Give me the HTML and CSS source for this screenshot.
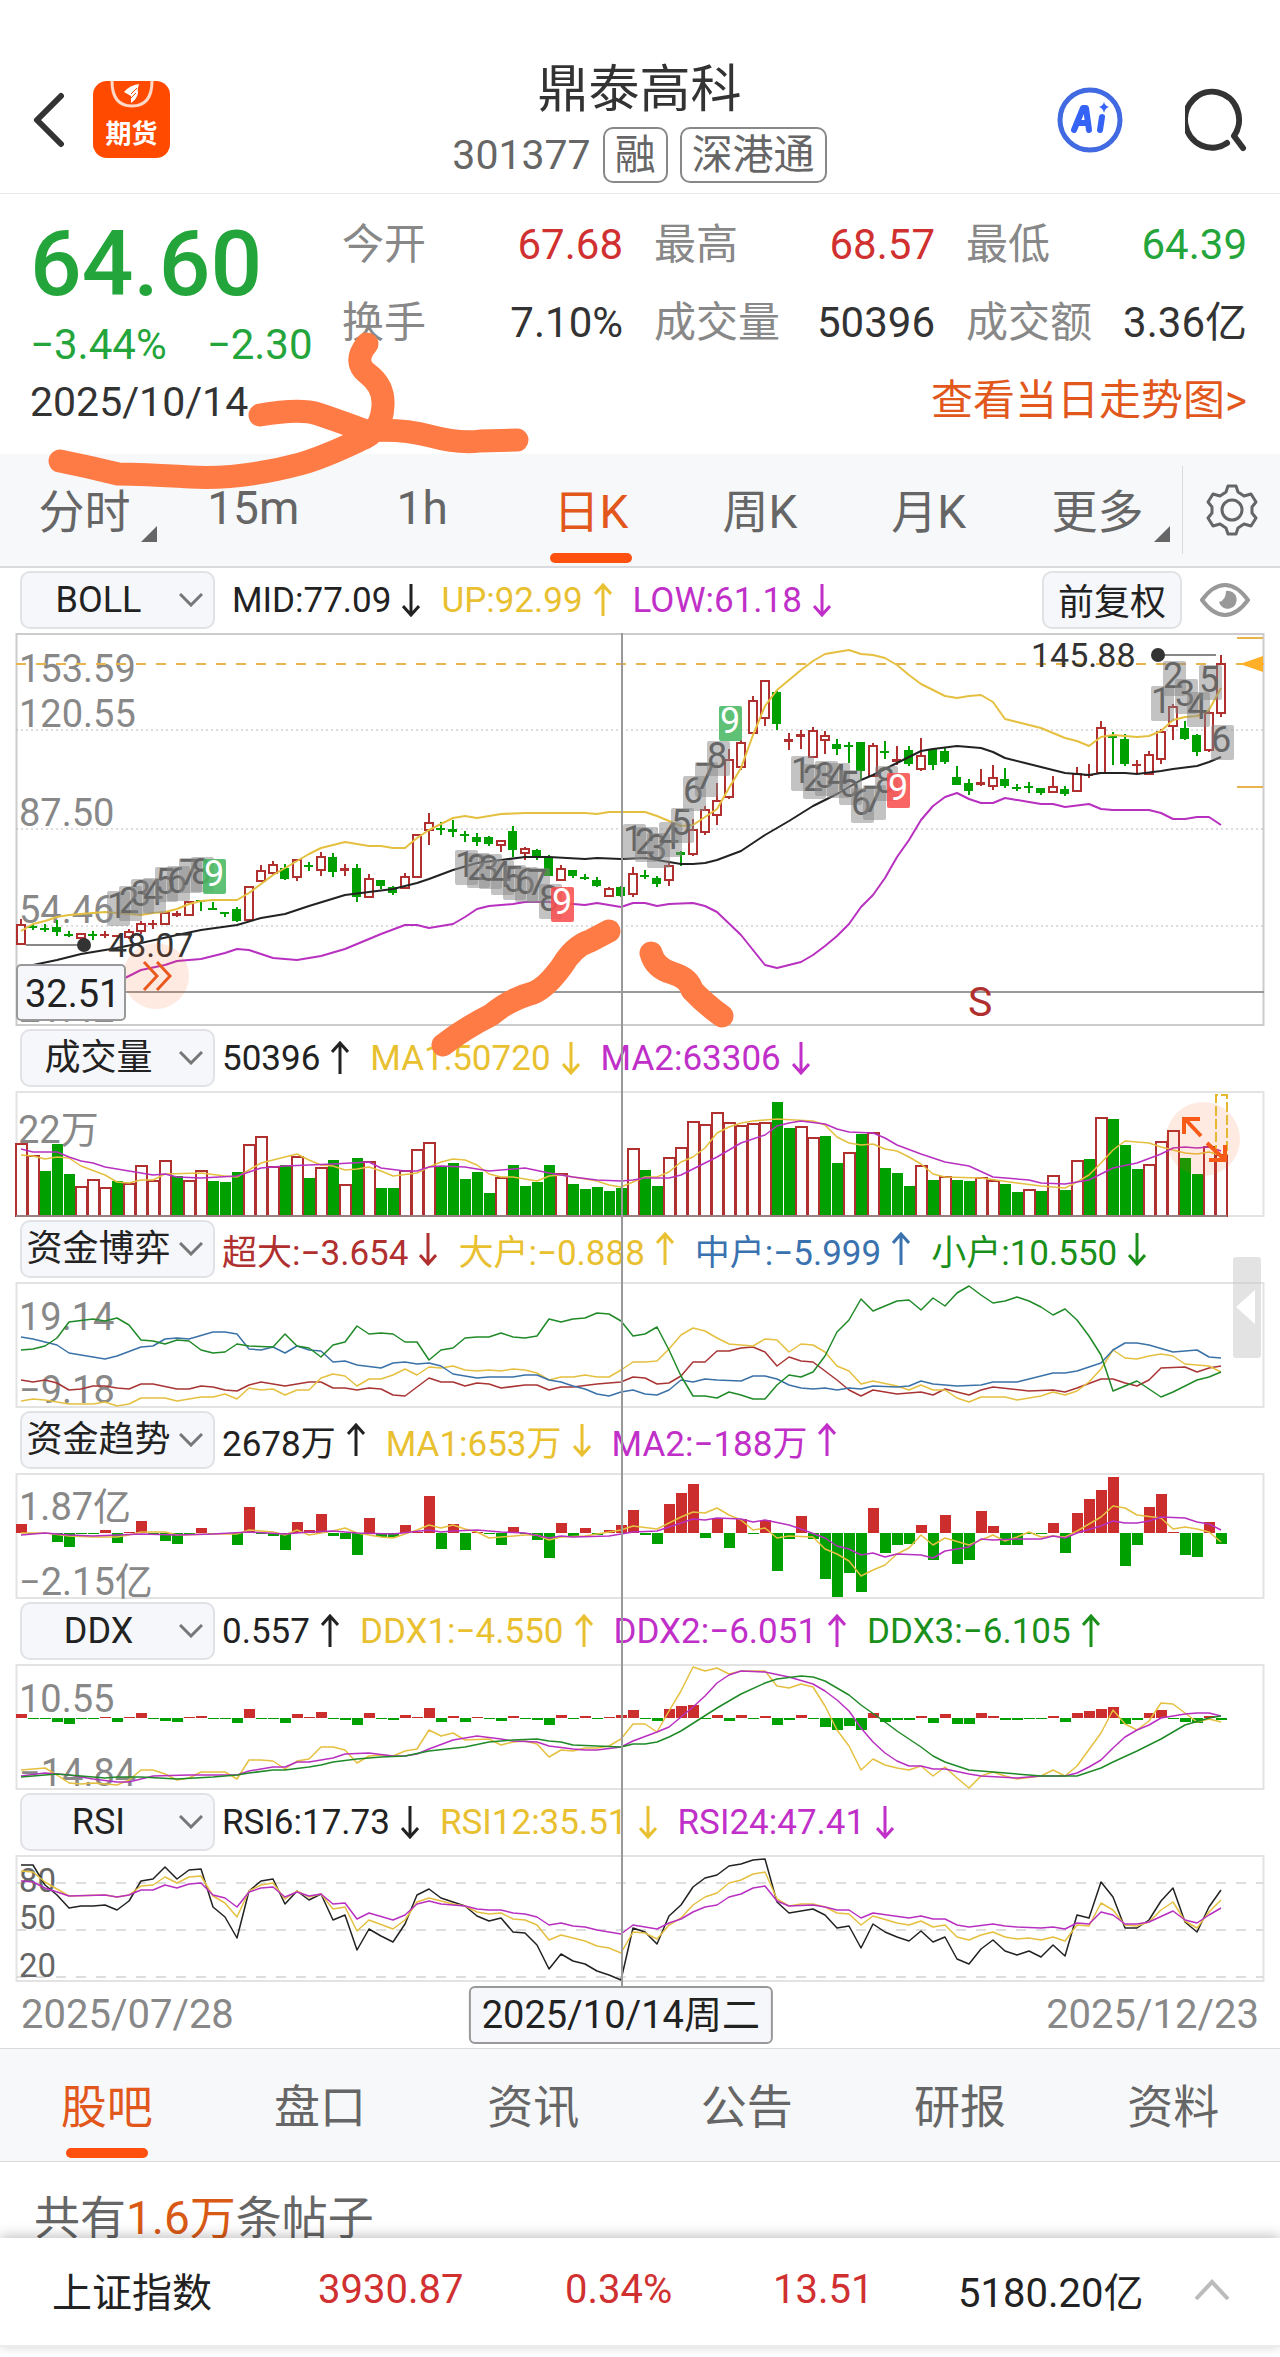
FILE: index.html
```html
<!DOCTYPE html>
<html lang="zh-CN">
<head>
	<meta charset="utf-8">
	<meta name="viewport" content="width=device-width">
	<title>鼎泰高科 301377</title>
	<link rel="stylesheet" href="styles.css">
</head>
<body>
<svg class="defs" aria-hidden="true">
	<symbol id="up" viewBox="0 0 18 34"><path d="M9 33V2M1 11l8-9 8 9" fill="none" stroke="currentColor" stroke-width="3"/></symbol>
	<symbol id="down" viewBox="0 0 18 34"><path d="M9 1v31M1 23l8 9 8-9" fill="none" stroke="currentColor" stroke-width="3"/></symbol>
	<symbol id="chev" viewBox="0 0 24 14"><path d="M1 1l11 11L23 1" fill="none" stroke="currentColor" stroke-width="3"/></symbol>
</svg>
<div class="page">
	<header class="top">
		<div class="top_left">
			<button class="icon_btn" aria-label="返回"><svg width="34" height="56" viewBox="0 0 34 56"><path d="M29 4L5 28l24 24" fill="none" stroke="#333" stroke-width="6" stroke-linecap="round" stroke-linejoin="round"/></svg></button>
			<a class="futures" href="#">
				<svg width="44" height="28" viewBox="0 0 44 28"><path d="M2 0Q2 25 22 25T42 0" fill="none" stroke="#ffd9c8" stroke-width="3"/><path d="M14 11Q20 4 29 3Q27 8 28 12Q27 18 21 22L21 15Z" fill="#fff"/><path d="M21 13L27 7M21 17L26 12" stroke="#ff4a00" stroke-width="1"/></svg>
				<span>期货</span>
			</a>
		</div>
		<div class="top_mid">
			<h1>鼎泰高科</h1>
			<p class="code">301377 <span class="tag">融</span><span class="tag">深港通</span></p>
		</div>
		<div class="top_right">
			<button class="icon_btn ai" aria-label="Ai"><svg width="66" height="66" viewBox="0 0 66 66"><circle cx="33" cy="33" r="30" fill="none" stroke="#4169e1" stroke-width="5"/><path d="M17 43L26 21H29L32 43M21 36H31" fill="none" stroke="#3563f5" stroke-width="6" stroke-linejoin="round" stroke-linecap="round"/><path d="M45 30L43 43" stroke="#3563f5" stroke-width="6" stroke-linecap="round"/><path d="M47 15q1 4 5 5q-4 1-5 6q-1-5-5-6q4-1 5-5" fill="#3563f5"/></svg></button>
			<button class="icon_btn" aria-label="搜索"><svg width="62" height="64" viewBox="0 0 62 64"><path d="M42 55A27 28 0 1 1 49 48L58 60" fill="none" stroke="#333" stroke-width="6" stroke-linecap="round" stroke-linejoin="round"/></svg></button>
		</div>
	</header>

	<section class="quote">
		<div class="quote_left">
			<div class="price">64.60</div>
			<div class="change"><span>−3.44%</span><span>−2.30</span></div>
			<div class="day">2025/10/14</div>
		</div>
		<div class="quote_right">
			<dl class="stats">
				<div><dt>今开</dt><dd class="red">67.68</dd></div>
				<div><dt>最高</dt><dd class="red">68.57</dd></div>
				<div><dt>最低</dt><dd class="green">64.39</dd></div>
				<div><dt>换手</dt><dd>7.10%</dd></div>
				<div><dt>成交量</dt><dd>50396</dd></div>
				<div><dt>成交额</dt><dd>3.36亿</dd></div>
			</dl>
			<a class="more_link" href="#">查看当日走势图&gt;</a>
		</div>
	</section>

	<nav class="periods">
		<div class="tabs">
			<button class="tab corner">分时</button>
			<button class="tab">15m</button>
			<button class="tab">1h</button>
			<button class="tab active">日K</button>
			<button class="tab">周K</button>
			<button class="tab">月K</button>
			<button class="tab corner">更多</button>
		</div>
		<button class="setting" aria-label="设置"><svg width="52" height="54" viewBox="0 0 52 54"><path d="M22 3H30L32 9L38 13L45 11L50 19L46 24V30L50 35L45 43L38 41L32 45L30 51H22L20 45L14 41L7 43L2 35L6 30V24L2 19L7 11L14 13L20 9Z" fill="none" stroke="#666" stroke-width="3" stroke-linejoin="round"/><circle cx="26" cy="27" r="10" fill="none" stroke="#666" stroke-width="3"/></svg></button>
	</nav>

	<main class="charts">
		<div class="row row_main">
			<span class="picker"><select aria-label="主图指标"><option>BOLL</option></select><svg><use href="#chev"/></svg></span>
			<span class="val">MID:77.09<svg><use href="#down"/></svg></span>
			<span class="val yellow">UP:92.99<svg><use href="#up"/></svg></span>
			<span class="val purple">LOW:61.18<svg><use href="#down"/></svg></span>
			<button class="adjust">前复权</button>
			<button class="icon_btn" aria-label="显示"><svg width="50" height="36" viewBox="0 0 50 36"><path d="M2 18Q13 3 25 3T48 18Q37 33 25 33T2 18Z" fill="none" stroke="#999" stroke-width="4"/><path d="M26 9a9 9 0 1 1-7 11Q26 18 26 9" fill="#999"/></svg></button>
		</div>
		<svg class="chart" id="kline" viewBox="16 0 1248 393"></svg>

		<div class="row">
			<span class="picker"><select aria-label="副图一"><option>成交量</option></select><svg><use href="#chev"/></svg></span>
			<span class="val">50396<svg><use href="#up"/></svg></span>
			<span class="val yellow">MA1:50720<svg><use href="#down"/></svg></span>
			<span class="val purple">MA2:63306<svg><use href="#down"/></svg></span>
		</div>
		<svg class="chart" id="volume" viewBox="16 0 1248 126"></svg>

		<div class="row">
			<span class="picker"><select aria-label="副图二"><option>资金博弈</option></select><svg><use href="#chev"/></svg></span>
			<span class="val crimson">超大:−3.654<svg><use href="#down"/></svg></span>
			<span class="val yellow">大户:−0.888<svg><use href="#up"/></svg></span>
			<span class="val blue">中户:−5.999<svg><use href="#up"/></svg></span>
			<span class="val leaf">小户:10.550<svg><use href="#down"/></svg></span>
		</div>
		<svg class="chart" id="game" viewBox="16 0 1248 126"></svg>

		<div class="row">
			<span class="picker"><select aria-label="副图三"><option>资金趋势</option></select><svg><use href="#chev"/></svg></span>
			<span class="val">2678万<svg><use href="#up"/></svg></span>
			<span class="val yellow">MA1:653万<svg><use href="#down"/></svg></span>
			<span class="val purple">MA2:−188万<svg><use href="#up"/></svg></span>
		</div>
		<svg class="chart" id="trend" viewBox="16 0 1248 126"></svg>

		<div class="row">
			<span class="picker"><select aria-label="副图四"><option>DDX</option></select><svg><use href="#chev"/></svg></span>
			<span class="val">0.557<svg><use href="#up"/></svg></span>
			<span class="val yellow">DDX1:−4.550<svg><use href="#up"/></svg></span>
			<span class="val purple">DDX2:−6.051<svg><use href="#up"/></svg></span>
			<span class="val leaf">DDX3:−6.105<svg><use href="#up"/></svg></span>
		</div>
		<svg class="chart" id="ddx" viewBox="16 0 1248 126"></svg>

		<div class="row">
			<span class="picker"><select aria-label="副图五"><option>RSI</option></select><svg><use href="#chev"/></svg></span>
			<span class="val">RSI6:17.73<svg><use href="#down"/></svg></span>
			<span class="val yellow">RSI12:35.51<svg><use href="#down"/></svg></span>
			<span class="val purple">RSI24:47.41<svg><use href="#down"/></svg></span>
		</div>
		<svg class="chart" id="rsi" viewBox="16 0 1248 127"></svg>

		<div class="dates"><span>2025/07/28</span><span>2025/12/23</span></div>
		<div class="cross"></div>
		<div class="cross_date">2025/10/14周二</div>
		<button class="handle" aria-label="展开"></button>
	</main>

	<nav class="tabs info_tabs">
		<button class="tab active">股吧</button>
		<button class="tab">盘口</button>
		<button class="tab">资讯</button>
		<button class="tab">公告</button>
		<button class="tab">研报</button>
		<button class="tab">资料</button>
	</nav>
	<p class="posts">共有<b>1.6万</b>条帖子</p>

	<footer class="index_bar">
		<span>上证指数</span>
		<span class="red">3930.87</span>
		<span class="red">0.34%</span>
		<span class="red">13.51</span>
		<span>5180.20亿</span>
		<svg width="36" height="22" viewBox="0 0 36 22"><path d="M2 20L18 3l16 17" fill="none" stroke="#bbb" stroke-width="4"/></svg>
	</footer>

	<!-- hand-drawn marks -->
	<svg class="doodle" viewBox="0 0 1280 2357" aria-hidden="true">
		<path d="M367 344Q352 362 368 374T383 405Q382 432 360 440Q322 458 300 464Q240 480 190 477T118 474Q90 467 60 461"/>
		<path d="M260 415Q300 408 318 414T366 431Q400 428 430 436T480 441L517 440"/>
		<path d="M609 931L590 941Q574 946 562 966Q546 988 533 993Q510 999 491 1015Q465 1028 443 1045"/>
		<path d="M651 953Q655 968 672 973T692 990Q704 1003 722 1016"/>
	</svg>
</div>
<script src="script.js"></script>
</body>
</html>
```

FILE: styles.css
```css
/* =====reset===== */
body, h1, p, dl, dt, dd { margin: 0; padding: 0; font-weight: normal; }
body { background: #fff; color: #333; font-family: "Roboto", "Noto Sans CJK SC", sans-serif; }
button, select { font-family: inherit; color: inherit; border: 0; padding: 0; margin: 0; background: none; }
a { text-decoration: none; }
svg { display: block; }
.defs { position: absolute; width: 0; height: 0; }
.page { position: relative; overflow: hidden; padding-bottom: 10px; }

/* =====colors===== */
.red { color: #d03030; }
.green { color: #24a53b; }
.yellow { color: #e8c030; }
.purple { color: #c030c8; }
.crimson { color: #b03030; }
.blue { color: #3a72b0; }
.leaf { color: #1a901a; }

/* =====header===== */
.top { display: grid; grid-template-columns: 1fr auto 1fr; align-items: center; padding: 56px 33px 10px 32px; border-bottom: 1px solid #eaeaea; }
.top_left, .top_right { display: flex; align-items: center; }
.top_left { gap: 27px; }
.top_right { justify-content: flex-end; gap: 62px; }
.futures { display: flex; flex-direction: column; align-items: center; justify-content: space-between; width: 77px; height: 77px; border-radius: 14px; background: #ff4a00; color: #fff; font-size: 26px; font-weight: bold; line-height: 48px; }
.top_mid { display: flex; flex-direction: column; align-items: center; gap: 4px; }
h1 { font-size: 51px; line-height: 67px; }
.code { display: flex; align-items: center; color: #666; font-size: 41px; line-height: 52px; }
.tag { margin-left: 12px; padding: 0 10px; border: 2px solid #888; border-radius: 10px; }

/* =====quote===== */
.quote { display: grid; grid-template-columns: 312px 1fr; padding: 12px 33px 14px 30px; }
.price { margin-top: 14px; color: #24a53b; font-size: 91px; font-weight: 500; line-height: 88px; }
.change { display: flex; gap: 40px; margin-top: 9px; color: #24a53b; font-size: 42px; line-height: 56px; }
.day { font-size: 41px; line-height: 58px; }
.stats { display: grid; grid-template-columns: repeat(3, 1fr); column-gap: 31px; font-size: 42px; line-height: 78px; white-space: nowrap; }
.stats div { display: flex; justify-content: space-between; }
.stats dt { color: #888; }
.more_link { display: block; text-align: right; color: #e2571c; font-size: 42px; line-height: 78px; }

/* =====tabs===== */
.periods { display: flex; align-items: center; background: #f7f8fa; border-bottom: 2px solid #d9dadd; }
.tabs { display: flex; flex: 1; }
.tab { position: relative; flex: 1; height: 112px; padding-bottom: 4px; color: #666; font-size: 46px; }
.active { color: #e2571c; }
.active::after { content: ""; position: absolute; left: 50%; bottom: 3px; width: 82px; height: 10px; margin-left: -41px; border-radius: 5px; background: #ff5010; }
.corner::after { content: ""; position: absolute; right: 12px; bottom: 24px; border-left: 16px solid transparent; border-bottom: 16px solid #666; }
.setting { display: flex; align-items: center; justify-content: center; width: 98px; height: 88px; border-left: 1px solid #d9dadd; }

/* =====charts===== */
.charts { position: relative; }
.row { display: flex; align-items: center; box-sizing: border-box; height: 65px; padding: 0 20px 1px; font-size: 35px; color: #222; white-space: nowrap; }
.picker { position: relative; width: 195px; margin-right: 7px; }
.picker select { box-sizing: border-box; display: block; width: 100%; height: 58px; padding-right: 38px; appearance: none; border: 2px solid #e0e2e6; border-radius: 10px; background: #f6f7fa; color: #222; font-size: 36px; text-align: center; text-align-last: center; }
.picker svg { position: absolute; right: 12px; top: 22px; width: 24px; height: 14px; color: #777; pointer-events: none; }
.row_main .picker { margin-right: 17px; }
.val { display: flex; align-items: center; gap: 11px; margin-right: 21px; }
.val svg { width: 18px; height: 34px; }
.adjust { box-sizing: border-box; width: 140px; height: 58px; margin: 0 18px 0 auto; padding-bottom: 4px; border: 2px solid #e0e2e6; border-radius: 10px; background: #f6f7fa; font-size: 36px; }
.row_main .icon_btn { margin-right: 10px; }
.chart { display: block; box-sizing: border-box; width: calc(100% - 32px); margin: 0 16px; height: auto; overflow: visible; }
.axis { fill: #888; font-size: 38px; }
.axis_rsi { fill: #666; font-size: 33px; }
.mark { fill: #333; font-size: 34px; }
.badge { fill: #222; font-size: 38px; }
.sell { fill: #b03030; font-size: 41px; }
.seq { fill: #666; font-size: 36px; text-anchor: middle; }
.seq_last { fill: #fff; }
.dates { display: flex; justify-content: space-between; padding: 0 21px; color: #888; font-size: 40px; line-height: 66px; }
.cross { position: absolute; left: 48.5%; top: 65px; bottom: 61px; width: 2px; background: #999; }
.cross_date { position: absolute; left: 48.5%; bottom: 4px; transform: translateX(-50%); padding: 0 11px; border: 2px solid #999; border-radius: 6px; background: #f6f7fa; color: #222; font-size: 38px; line-height: 54px; white-space: nowrap; }
.handle { position: absolute; right: 19px; top: 689px; width: 28px; height: 101px; border-radius: 3px; background: rgba(200, 200, 200, .5); }
.handle::after { content: ""; position: absolute; left: 3px; top: 33px; border: 17px solid transparent; border-left: 0; border-right: 19px solid #fff; }

/* =====bottom===== */
.info_tabs { background: #f7f8fa; border-top: 1px solid #d9dadd; border-bottom: 1px solid #d9dadd; }
.posts { padding: 0 34px; color: #666; font-size: 46px; line-height: 112px; }
.posts b { color: #d95a14; font-weight: normal; }
.index_bar { position: relative; display: grid; grid-template-columns: 266fr 247fr 208fr 185fr 236fr 36fr; align-items: center; box-sizing: border-box; height: 109px; margin-top: -36px; padding: 0 50px 4px 52px; background: #fff; border-bottom: 2px solid #ececec; box-shadow: 0 -2px 12px rgba(0, 0, 0, .25); color: #222; font-size: 40px; white-space: nowrap; }
.index_bar .red { color: #d03030; }
.doodle { position: absolute; left: 0; top: 0; width: 100%; pointer-events: none; }
.doodle path { fill: none; stroke: #ff7b45; stroke-width: 23; stroke-linecap: round; stroke-linejoin: round; }
```

FILE: script.js
```js
var STEP = 12, X0 = 21;
var RED = "#b03030", GREEN = "#00a000", YELLOW = "#e5c040", PURPLE = "#b830c0", BLACK = "#222";

function px(i) { return X0 + STEP * i; }

function add(box, name, attrs, text) {
	var el = document.createElementNS("http://www.w3.org/2000/svg", name);
	for (var k in attrs) el.setAttribute(k, attrs[k]);
	if (text) el.textContent = text;
	box.appendChild(el);
	return el;
}

// "index,y index,y ..." -> polyline
function line(box, color, data, width) {
	var pts = data.trim().split(/\s+/).map(function (p) {
		var a = p.split(",");
		return px(+a[0]) + "," + a[1];
	});
	add(box, "polyline", {points: pts.join(" "), fill: "none", stroke: color, "stroke-width": width || 1.5, "stroke-linejoin": "round"});
}

function frame(box, h, color) {
	add(box, "rect", {x: 16.5, y: 1, width: 1247, height: h - 2, fill: "none", stroke: color || "#e3e3e3", "stroke-width": 2});
}

function hline(box, y, color, dash, width) {
	add(box, "line", {x1: 16, x2: 1264, y1: y, y2: y, stroke: color, "stroke-width": width || 1, "stroke-dasharray": dash || "none"});
}

function label(box, x, y, text, cls) {
	add(box, "text", {x: x, y: y, "class": cls || "axis"}, text);
}

// solid bars above / below the zero line
function zeroBars(box, zero, data) {
	data.forEach(function (v, i) {
		var h = Math.max(1, Math.abs(v));
		add(box, "rect", {x: px(i) - 5, y: v > 0 ? zero - h : zero, width: 11, height: h, fill: v > 0 ? "#cc2e2e" : GREEN});
	});
}

/* ===== k line ===== */
var k = document.getElementById("kline");
frame(k, 393, "#ccc");
[97, 196, 293].forEach(function (y) { hline(k, y, "#bbb", "2 3"); });
label(k, 19, 49, "153.59");
label(k, 19, 94, "120.55");
label(k, 19, 193, "87.50");
label(k, 19, 290, "54.46");
label(k, 19, 389, "21.42");
hline(k, 31, "#e8b44c", "10 10", 2);

// up/down, high, body top, body bottom, low
var candles = "r 286 292 311 311,g 291 293 294 297,g 291 295 297 299,g 287 294 299 303,g 298 301 303 304,r 301 301 305 307,g 298 301 302 307,r 298 301 303 305,r 302 302 303 303,r 296 299 304 306," +
	"r 288 291 298 301,r 287 290 292 296,r 280 280 291 292,r 278 280 283 284,r 268 269 282 283,g 267 267 268 278,g 269 275 276 277,g 279 279 281 284,g 274 276 288 289,r 253 254 287 287," +
	"r 232 238 248 249,r 228 232 240 242,g 231 235 246 247,r 226 227 244 248,g 229 232 233 238,r 219 224 237 243,g 220 224 239 244,r 231 235 238 243,g 231 235 264 269,r 241 246 264 265," +
	"g 247 247 253 256,g 253 254 260 262,r 240 244 255 255,r 202 202 244 245,r 180 190 197 212,g 189 195 197 202,g 187 196 199 204,g 198 201 202 209,g 200 204 209 213,g 203 204 211 213," +
	"r 208 208 212 219,g 193 198 217 224,r 214 216 220 227,g 216 217 223 227,g 222 225 243 243,r 232 236 247 248,g 237 237 243 245,g 241 244 245 247,g 244 247 253 254,r 254 256 263 264," +
	"g 253 254 263 264,r 234 241 261 264,g 237 242 243 246,g 243 245 251 254,r 230 233 247 253,g 218 219 222 233,r 186 197 221 223,r 173 177 199 202,r 150 168 182 192,r 116 127 164 166," +
	"r 107 110 134 137,r 63 68 100 101,r 47 48 85 93,g 58 59 91 97,r 100 106 109 117,r 97 101 104 116,r 94 98 124 124,r 98 103 107 121,g 106 111 116 122,g 109 112 114 130," +
	"g 109 109 138 148,r 110 113 143 144,g 108 118 120 126,r 113 126 129 132,g 113 117 131 133,r 105 123 136 138,g 115 116 132 137,g 114 118 129 131,g 133 144 152 152,g 146 150 158 162," +
	"r 136 149 152 153,r 132 145 153 157,g 135 146 153 155,g 151 154 156 158,g 149 153 154 160,g 155 155 160 162,r 143 154 159 160,g 153 156 161 163,r 134 141 158 159,r 131 141 143 145," +
	"r 88 95 140 141,g 99 103 105 132,g 101 106 131 133,r 127 131 133 140,r 118 122 141 141,r 96 99 126 131,r 71 74 93 107,g 88 95 106 107,g 101 102 119 123,r 76 80 117 119,r 22 31 80 84";
candles.split(",").forEach(function (s, i) {
	var a = s.split(" "), up = a[0] == "r", c = up ? RED : GREEN, x = px(i);
	add(k, "line", {x1: x, x2: x, y1: a[1], y2: a[4], stroke: c, "stroke-width": 2});
	if (up && a[3] - a[2] > 3)
		add(k, "rect", {x: x - 4, y: a[2], width: 8, height: a[3] - a[2], fill: "#fff", stroke: c, "stroke-width": 2});
	else
		add(k, "rect", {x: x - 5, y: a[2], width: 9, height: Math.max(2, a[3] - a[2]), fill: c});
});

line(k, YELLOW, "0,298 1,291 2,288 3,284 4,282 5,281 6,280 7,279 8,280 9,281 10,282 11,280 12,279 13,276 14,271 15,268 16,267 18,267 19,260 20,251 21,242 22,235 23,228 24,221 25,215 26,212 27,209 28,211 29,213 30,213 31,215 32,215 33,205 34,197 35,191 36,185 37,183 38,185 39,183 40,181 42,180 47,180 48,181 49,179 50,179 52,179 53,183 54,188 55,193 56,192 57,184 58,176 59,155 60,135 61,102 62,73 63,57 64,47 65,37 66,28 67,21 68,19 69,17 70,21 71,22 72,25 73,32 74,42 75,51 76,57 77,63 78,65 79,63 80,62 81,69 82,86 83,89 84,92 85,95 87,105 88,108 89,113 90,104 91,102 93,104 94,103 95,98 96,87 97,84 98,83 99,77 100,55", 2);
line(k, BLACK, "0,334 1,332 3,327 5,321 8,315 10,310 13,302 15,297 18,292 20,285 22,281 24,273 27,262 29,259 31,256 33,250 34,246 36,237 38,230 40,227 42,224 44,224 47,226 48,225 50,226 52,225 53,227 54,229 55,231 56,231 57,230 58,227 60,218 62,202 64,188 66,173 68,161 70,147 71,142 73,130 75,118 76,116 78,113 80,115 81,119 82,125 84,131 87,140 89,142 90,140 92,140 93,141 95,138 96,136 98,133 99,129 100,124", 2);
line(k, PURPLE, "8,349 10,337 12,332 13,328 15,326 17,320 18,316 19,317 20,321 21,325 23,327 25,323 27,316 29,306 30,301 32,292 33,292 34,295 36,291 37,284 38,276 39,273 41,271 42,269 44,269 46,271 47,272 48,270 50,274 51,270 52,270 53,273 54,271 56,270 57,273 58,279 60,302 62,332 63,335 65,329 66,322 67,313 68,303 69,291 70,274 71,262 72,245 73,224 74,207 75,187 76,173 77,164 78,160 79,166 80,170 81,170 82,165 84,169 85,171 86,171 87,174 89,171 90,176 91,177 94,177 95,180 96,186 97,186 98,184 99,184 100,192", 2);

// nine-turn counters: first bar, colour of the 9, tops
[
	[8, "#48b862", [258, 253, 246, 245, 234, 233, 225, 224, 226]],
	[37, "#f85050", [217, 220, 221, 227, 232, 234, 235, 251, 254]],
	[51, "#48b862", [191, 194, 200, 189, 175, 143, 129, 108, 73]],
	[65, "#f85050", [123, 131, 128, 130, 137, 155, 152, 133, 140]],
	[95, "", [53, 28, 46, 59, 32, 92]]
].forEach(function (g) {
	g[2].forEach(function (top, n) {
		var x = px(g[0] + n) + 1, last = n == 8;
		add(k, "rect", {x: x - 11, y: top, width: 23, height: 35, rx: 2, fill: last ? g[1] : "#888", "fill-opacity": last ? .88 : .5});
		add(k, "text", {x: x - (last ? 0 : 1), y: top + 27, "class": last ? "seq seq_last" : "seq"}, n + 1);
	});
});

hline(k, 359, "#999", "", 2);
add(k, "line", {x1: 26, x2: 80, y1: 312, y2: 312, stroke: "#888", "stroke-width": 2});
add(k, "circle", {cx: 84, cy: 312, r: 7, fill: "#333"});
label(k, 108, 324, "48.07", "mark");
add(k, "line", {x1: 1160, x2: 1216, y1: 22, y2: 22, stroke: "#888", "stroke-width": 2});
add(k, "circle", {cx: 1158, cy: 22, r: 7, fill: "#333"});
label(k, 1031, 34, "145.88", "mark");
label(k, 968, 383, "S", "sell");
add(k, "path", {d: "M1240 31L1263 23V39Z", fill: "#ffb028"});
add(k, "path", {d: "M1237 5H1263M1237 154H1263", stroke: "#e8b44c", "stroke-width": 2});
add(k, "circle", {cx: 156, cy: 343, r: 33, fill: "#ff5010", "fill-opacity": .12});
add(k, "path", {d: "M144 329L157 343L144 357M157 329L170 343L157 357", fill: "none", stroke: "#e85a20", "stroke-width": 3});
add(k, "rect", {x: 17, y: 332, width: 108, height: 55, rx: 4, fill: "#f6f7fa", stroke: "#999", "stroke-width": 2});
label(k, 25, 374, "32.51", "badge");

/* ===== volume ===== */
var v = document.getElementById("volume");
frame(v, 126);
[72,60,-45,-72,-42,29,36,28,-35,32,50,35,55,-40,35,45,-35,-34,-44,71,79,49,-51,59,-38,48,-56,31,-58,54,-28,-28,45,66,73,-49,-53,-37,-44,-23,38,-51,-30,-34,-51,42,-32,-27,-29,-25,-28,67,
-46,-30,58,68,94,91,103,93,90,92,93,-114,-88,89,78,-80,-53,63,-82,83,-48,-43,-30,50,-36,39,-36,-35,38,35,-32,-24,26,-25,40,-26,55,-57,98,-97,-71,-47,51,74,85,-58,-42,69,61].forEach(function (h, i) {
	if (h > 0)
		add(v, "rect", {x: px(i) - 5, y: 125 - h, width: 11, height: h, fill: "#fff", stroke: RED, "stroke-width": 2});
	else
		add(v, "rect", {x: px(i) - 5, y: 125 + h, width: 11, height: 1 - h, fill: GREEN});
});
label(v, 18, 52, "22万");
add(v, "path", {d: "M16 125H1227", stroke: "#998080", "stroke-width": 2});
line(v, YELLOW, "0,64 1,65 2,68 3,66 4,67 5,75 7,84 8,91 9,92 10,89 11,89 12,83 15,82 17,85 18,86 19,79 20,72 23,63 24,69 25,74 26,75 27,79 28,78 29,76 30,80 31,85 33,82 34,76 35,71 36,68 37,69 38,74 39,83 40,86 41,86 43,90 44,85 45,84 48,90 49,94 50,96 51,91 52,86 53,86 54,81 55,71 56,66 57,57 58,42 59,36 60,32 61,30 63,28 66,30 67,34 68,46 69,52 70,54 71,53 72,58 73,60 74,66 75,73 76,83 77,86 80,87 83,92 85,95 87,97 88,91 89,84 90,72 91,59 92,50 94,52 95,56 96,59 97,62 98,63 99,61 100,64");
line(v, PURPLE, "0,58 1,61 3,61 4,66 5,70 6,72 7,76 9,80 11,84 12,83 13,86 15,87 18,85 19,81 20,77 22,75 26,73 29,71 30,77 32,80 33,80 34,76 35,75 37,76 39,80 42,77 44,82 46,86 48,89 50,90 51,89 52,87 54,87 55,84 56,78 58,66 60,52 62,44 63,35 64,32 65,30 67,33 68,38 69,41 71,42 72,47 73,54 75,63 77,71 79,75 81,86 84,89 85,92 87,93 88,91 89,89 91,77 93,72 95,63 96,57 97,56 98,57 99,56 100,60");
add(v, "circle", {cx: 1203, cy: 48, r: 37, fill: "#ff5010", "fill-opacity": .12});
add(v, "path", {d: "M1216 64V4H1227V64", fill: "none", stroke: "#e5b830", "stroke-width": 2, "stroke-dasharray": "10 3"});
add(v, "path", {d: "M1201 45L1185 28M1184 43V28H1200M1207 52L1224 68M1225 54V69H1209", fill: "none", stroke: "#f85a18", "stroke-width": 4});

/* ===== 资金博弈 ===== */
var g = document.getElementById("game");
frame(g, 126);
label(g, 19, 48, "19.14");
label(g, 19, 121, "−9.18");
line(g, "#a83434", "0,98 1,100 2,98 3,101 4,108 5,107 6,104 7,104 8,106 9,107 10,102 11,102 13,107 14,107 15,104 16,105 17,108 18,109 19,103 20,100 22,104 24,100 25,100 26,106 27,106 28,108 29,106 30,107 31,113 32,114 34,96 35,100 36,100 37,104 38,101 39,102 40,106 42,103 43,103 44,108 45,105 46,105 48,102 50,100 51,95 52,96 53,102 54,101 55,94 56,80 57,80 58,69 59,69 60,66 61,65 62,70 63,84 64,75 65,79 66,80 67,89 68,98 69,108 70,114 71,108 73,112 75,110 76,113 77,107 79,113 80,108 81,105 84,109 86,108 87,110 88,106 90,97 91,97 92,101 93,104 94,98 95,86 97,85 98,90 99,86 100,84");
line(g, YELLOW, "0,119 1,117 2,118 4,122 6,122 7,120 8,124 9,122 10,116 12,116 13,119 15,115 16,115 17,112 18,117 19,106 20,108 21,107 22,113 23,108 24,108 25,96 26,92 27,94 28,104 29,97 30,97 31,93 32,87 33,93 34,85 35,86 36,84 37,88 38,89 39,88 40,89 41,87 42,88 43,91 44,98 45,95 46,95 47,93 48,95 49,95 50,88 51,80 52,80 53,79 54,67 55,53 56,46 57,49 58,56 59,62 60,63 61,64 62,57 63,58 64,70 65,62 66,63 67,70 68,84 69,89 70,102 71,99 73,104 74,108 75,103 76,108 77,108 78,116 79,120 80,115 82,115 83,118 85,114 86,110 87,113 88,109 89,100 90,87 91,68 92,76 93,77 94,74 95,72 96,74 97,82 99,84 100,90");
line(g, "#3a72a8", "0,55 1,57 3,63 4,71 5,73 7,77 8,74 10,65 11,64 12,57 13,56 14,57 16,50 17,50 18,52 19,67 20,68 21,65 22,71 23,64 24,68 25,69 26,80 27,79 28,83 30,86 31,81 32,80 33,82 34,81 35,84 36,92 38,96 39,95 41,95 42,93 43,93 44,98 45,100 46,104 47,107 48,112 49,114 50,110 51,108 52,112 53,113 54,108 55,98 56,100 57,97 58,98 60,99 61,94 62,94 63,97 64,103 65,106 66,107 67,106 68,108 69,106 70,107 71,104 73,105 74,104 75,99 76,102 78,104 80,103 81,100 83,100 84,97 86,91 87,91 88,89 90,81 91,68 92,61 93,61 94,63 96,70 98,68 99,75 100,76");
line(g, "#208a28", "0,68 1,67 2,64 3,56 4,40 6,37 7,39 8,36 9,43 10,58 11,59 12,62 13,58 14,59 15,68 16,71 17,70 18,62 19,64 21,65 22,52 23,64 24,66 25,75 26,63 27,60 28,44 29,52 30,51 31,52 32,60 33,60 34,78 35,68 36,66 37,56 38,55 39,55 40,51 41,55 42,56 43,54 44,37 45,40 46,37 47,36 48,31 49,32 50,39 51,54 52,52 53,45 54,68 55,94 56,114 57,114 58,116 59,110 60,113 61,117 62,117 63,103 64,93 65,95 66,90 67,74 68,50 69,38 70,17 71,29 72,24 73,19 74,18 75,28 76,16 77,24 78,11 79,4 80,13 81,21 82,19 83,15 84,19 85,25 86,33 87,27 88,38 89,54 90,73 91,109 92,104 93,99 94,107 95,115 96,110 97,104 98,98 99,95 100,90");

/* ===== 资金趋势 ===== */
var t = document.getElementById("trend");
frame(t, 126);
label(t, 19, 47, "1.87亿");
label(t, 19, 122, "−2.15亿");
zeroBars(t, 60, [9,-1,-1,-9,-14,-1,-1,3,-10,1,12,-1,-8,-11,-1,5,-1,-1,-12,26,-1,-3,-17,11,3,19,-3,-6,-22,15,-4,-4,8,1,37,-16,9,-17,1,-1,-12,6,-1,-7,-25,10,-3,5,-2,3,8,23,-2,-11,29,40,49,-5,15,-15,14,-1,13,-38,-6,17,-6,-46,-64,-40,-59,25,-20,-12,-11,8,-27,18,-31,-27,22,7,-12,-12,-1,-1,10,-20,20,34,43,56,-33,-12,26,39,1,-22,-24,11,-11]);
line(t, YELLOW, "0,60 2,60 4,63 6,64 8,64 9,62 10,59 12,59 13,62 16,61 18,61 19,57 20,58 21,59 22,62 23,57 24,62 26,58 27,55 28,60 30,64 31,65 33,57 34,52 35,55 36,52 37,56 38,59 39,65 40,64 42,62 43,62 44,67 45,64 47,63 49,59 50,57 51,53 53,56 54,50 55,44 56,39 57,40 58,35 59,42 60,47 61,57 62,55 63,65 64,63 66,64 67,76 68,81 69,88 70,103 71,97 72,92 73,81 74,75 75,62 76,72 77,65 79,72 81,62 82,68 83,64 84,59 85,64 86,63 87,64 88,58 89,51 90,44 91,33 92,35 93,42 95,45 96,56 97,54 98,56 99,59 100,69");
line(t, PURPLE, "0,62 2,60 4,62 6,63 8,62 10,61 13,62 16,61 19,59 22,61 24,59 26,58 28,60 31,61 34,57 35,59 36,58 38,57 40,59 42,60 44,65 45,63 46,64 49,63 51,59 53,58 54,54 55,50 56,46 57,47 58,45 60,46 61,49 62,47 64,52 65,56 67,65 68,73 69,76 70,82 71,80 72,84 73,81 75,82 76,85 77,78 79,74 80,66 81,67 83,66 85,66 86,63 87,65 88,60 90,53 91,48 92,50 93,50 94,48 95,44 97,45 98,49 99,51 100,57");

/* ===== DDX ===== */
var d = document.getElementById("ddx");
frame(d, 126);
label(d, 19, 48, "10.55");
label(d, 19, 122, "−14.84");
zeroBars(d, 54, [4,-1,-1,-4,-6,-1,-1,1,-4,1,5,-1,-3,-4,1,2,-1,-1,-5,9,-1,-1,-5,4,1,6,-1,-2,-7,5,-1,-2,3,1,10,-4,2,-4,1,-1,-3,2,-1,-2,-7,3,-1,2,-1,1,3,8,-1,-3,9,12,13,-1,3,-3,3,-1,2,-7,-2,3,-1,-9,-12,-8,-12,5,-4,-2,-2,2,-5,4,-6,-6,5,2,-2,-2,-1,-1,2,-4,5,7,9,11,-6,-2,5,8,-1,-4,-5,2,-2]);
line(d, YELLOW, "0,106 1,105 2,104 3,111 4,119 5,120 6,119 8,121 9,116 10,106 11,106 12,110 13,116 14,114 15,108 17,108 18,115 19,96 20,96 21,97 22,105 23,97 24,95 25,83 26,83 27,86 28,99 29,92 30,91 31,92 32,87 33,85 34,66 35,72 36,69 37,76 39,75 40,81 41,78 42,77 43,80 44,93 45,86 46,87 47,84 48,84 49,82 50,75 51,60 52,60 53,68 54,47 55,27 56,3 57,7 58,4 59,10 60,7 62,7 63,22 64,24 65,20 66,23 67,42 68,66 69,82 70,106 71,95 72,101 73,104 74,106 75,102 76,112 77,103 78,114 79,124 80,112 81,108 82,112 83,115 85,112 86,106 87,112 88,102 90,69 91,46 92,60 93,66 94,57 95,39 96,40 97,49 98,58 99,55 100,58");
line(d, PURPLE, "0,112 2,109 4,111 6,115 8,118 9,118 11,112 14,111 18,111 19,107 20,105 21,103 22,103 23,98 24,98 26,94 27,90 29,89 31,92 32,92 33,90 34,85 36,76 38,72 40,75 41,77 43,78 44,82 46,85 47,86 48,86 50,83 51,77 53,68 54,63 56,43 57,32 58,19 59,11 60,7 62,8 64,13 66,20 67,27 68,36 69,47 70,64 71,78 72,89 73,97 74,102 75,102 76,105 77,105 79,110 80,112 83,114 85,112 87,112 88,109 89,103 90,96 91,84 92,73 93,66 94,61 95,54 96,52 97,50 98,49 99,49 100,52");
line(d, "#208a28", "0,113 3,110 5,112 7,114 8,113 10,113 13,115 16,113 18,111 19,109 21,106 22,106 24,103 25,101 26,98 28,95 30,93 32,92 34,87 37,83 39,78 41,76 43,75 44,77 45,78 46,81 48,82 50,83 51,80 52,80 53,78 54,73 55,67 58,44 60,30 62,19 63,15 65,12 66,13 67,17 69,31 70,41 72,58 73,67 75,83 76,92 77,98 78,102 79,106 81,108 84,111 85,112 88,112 90,104 91,98 93,87 95,75 97,61 99,54 100,52");

/* ===== RSI ===== */
var r = document.getElementById("rsi");
frame(r, 127);
[28, 75, 122].forEach(function (y) { hline(r, y, "#ddd", "10 10", 2); });
label(r, 19, 37, "80", "axis_rsi");
label(r, 19, 74, "50", "axis_rsi");
label(r, 19, 122, "20", "axis_rsi");
line(r, BLACK, "0,10 1,10 2,30 3,40 4,53 5,51 6,51 7,50 8,55 9,46 10,26 11,24 12,12 13,24 14,15 15,14 16,52 17,62 18,83 19,36 20,26 21,24 22,49 23,36 24,45 25,39 26,65 27,60 28,95 29,74 30,81 31,87 32,69 33,40 34,34 35,43 36,47 37,51 38,61 39,66 40,63 41,77 42,78 43,90 44,114 45,99 46,106 47,109 48,116 49,120 50,125 51,73 52,77 53,89 54,61 55,50 56,32 57,23 58,20 59,11 60,9 61,5 62,4 63,47 64,58 65,56 66,54 67,60 68,73 69,71 70,93 71,69 72,77 73,82 74,86 75,76 76,87 77,82 78,104 79,109 80,94 81,85 82,96 83,100 84,96 85,102 86,90 87,101 88,60 89,63 90,27 91,42 92,73 93,73 94,65 95,46 96,33 97,67 98,77 99,52 100,35");
line(r, YELLOW, "0,16 1,17 2,27 3,34 4,41 7,40 8,42 9,40 10,31 11,30 12,22 13,28 14,22 15,21 16,41 17,48 18,62 19,36 20,30 21,28 22,44 23,36 24,42 25,39 26,54 27,52 28,76 29,65 31,74 32,65 33,47 34,43 36,49 37,51 38,57 39,59 40,58 41,64 42,65 43,70 44,85 45,80 47,86 48,91 49,93 50,98 51,77 52,78 53,84 54,70 55,63 56,50 57,42 58,38 59,28 60,25 61,19 62,17 63,44 64,51 65,49 66,49 67,52 68,58 69,59 70,70 71,61 73,68 74,70 75,66 76,72 77,70 78,82 79,85 80,80 81,77 82,82 83,84 84,83 85,85 86,82 87,86 88,70 89,71 90,48 91,55 92,70 93,71 94,67 95,55 96,47 97,66 98,73 99,57 100,45");
line(r, PURPLE, "0,26 1,27 2,33 3,37 4,41 7,40 8,42 9,40 10,35 11,35 12,30 13,33 14,29 15,28 16,40 17,43 18,52 19,37 20,33 21,32 22,42 23,37 24,41 25,39 26,49 27,48 28,64 29,58 31,65 32,60 33,49 34,46 35,49 37,51 38,54 39,55 40,55 41,58 42,59 43,62 44,70 45,68 46,71 47,72 48,75 50,79 51,70 52,72 53,74 54,68 55,64 56,57 57,52 58,50 59,42 60,39 61,33 62,31 63,46 64,51 66,50 67,52 68,55 69,55 70,63 71,58 74,63 75,61 76,64 77,64 78,70 79,72 81,69 82,71 83,72 85,73 86,72 87,74 88,68 89,69 90,57 91,60 92,69 93,69 94,67 96,56 97,65 98,68 99,60 100,53");
```
